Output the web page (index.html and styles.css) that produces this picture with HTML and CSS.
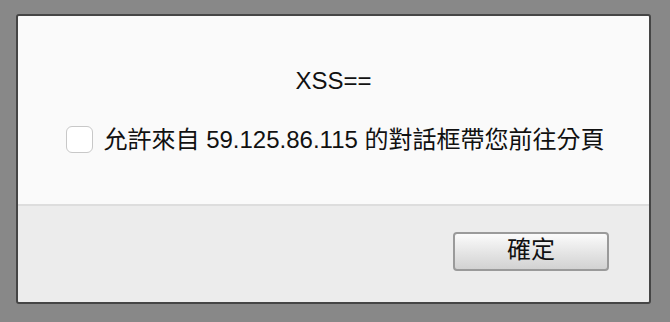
FILE: index.html
```html
<!DOCTYPE html>
<html lang="zh-Hant">
<head>
<meta charset="utf-8">
<link rel="stylesheet" href="styles.css">
</head>
<body>
<div class="dialog">
  <div class="content">
    <div class="title">XSS==</div>
    <label class="option">
      <span class="box"></span>
      <span class="label-text">允許來自 59.125.86.115 的對話框帶您前往分頁</span>
    </label>
  </div>
  <div class="footer">
    <button class="ok"><span class="ok-text">確定</span></button>
  </div>
</div>
</body>
</html>
```
FILE: styles.css
```css
html, body {
  margin: 0;
  padding: 0;
}
body {
  background: #888888;
  width: 670px;
  height: 322px;
  padding-top: 14px;
  padding-left: 16px;
  box-sizing: border-box;
  font-family: "Liberation Sans", "Noto Sans CJK TC", Arial, sans-serif;
  color: #111;
}
.dialog {
  width: 635px;
  height: 290px;
  box-sizing: border-box;
  border: 2px solid #454545;
  border-radius: 3px;
  overflow: hidden;
  display: flex;
  flex-direction: column;
}
.content {
  height: 188px;
  background: #fafafa;
  border-bottom: 2px solid #dddddd;
  display: flex;
  flex-direction: column;
  align-items: center;
}
.title {
  margin-top: 51px;
  font-size: 24px;
  line-height: 28px;
}
.option {
  margin-top: 30px;
  display: flex;
  align-items: center;
  gap: 10px;
  margin-left: 4px;
}
.box {
  width: 25px;
  height: 25px;
  border: 1px solid #c8c8c8;
  border-radius: 6px;
  background: #ffffff;
  box-sizing: content-box;
  margin-top: -2px;
}
.label-text {
  font-size: 24px;
  line-height: 30px;
}
.footer {
  flex: 1;
  background: #ececec;
  display: flex;
  justify-content: flex-end;
  align-items: flex-start;
  padding-top: 26px;
  padding-right: 40px;
}
.ok {
  width: 156px;
  height: 39px;
  box-sizing: border-box;
  border: 2px solid #9a9a9a;
  border-radius: 4px;
  background: linear-gradient(#fbfbfb, #e6e6e6 50%, #d2d2d2);
  font-family: "Liberation Sans", "Noto Sans CJK TC", sans-serif;
  font-size: 24px;
  line-height: 28px;
  color: #111;
  padding: 0 0 3px 0;
}
.ok-text {
  display: block;
}
```
